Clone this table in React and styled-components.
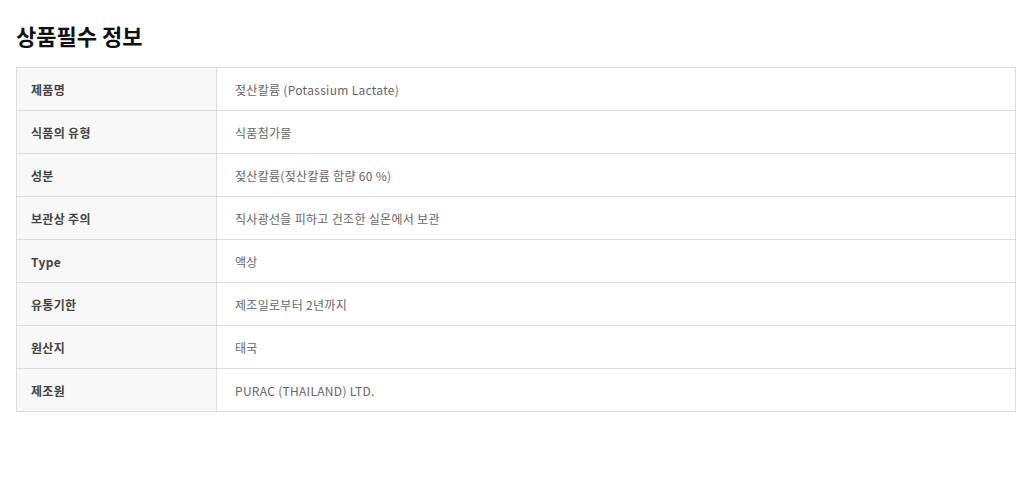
import React from "react";
import styled, { createGlobalStyle } from "styled-components";

const Global = createGlobalStyle`
  html, body { margin: 0; padding: 0; background: #fff; }
  body { font-family: "Noto Sans CJK KR", "Noto Sans", sans-serif; }
`;

const Wrap = styled.div`
  padding: 20px 17px 0 16px;
`;

const Title = styled.h2`
  margin: 0 0 17px;
  font-size: 22px;
  line-height: 30px;
  font-weight: 700;
  color: #111;
  letter-spacing: 0;
`;

const Table = styled.table`
  width: 1000px;
  border-collapse: collapse;
  table-layout: fixed;
  border: 1px solid #dcdcdc;
`;

const Row = styled.tr`
  height: 43px;
`;

const Th = styled.th`
  width: 200px;
  box-sizing: border-box;
  padding: 0 14px;
  background: #f8f8f8;
  border: 1px solid #dcdcdc;
  text-align: left;
  font-size: 12px;
  font-weight: 700;
  color: #444;
  letter-spacing: 0.3px;
`;

const Td = styled.td`
  padding: 0 18px;
  border: 1px solid #dcdcdc;
  font-size: 12px;
  color: #666;
  letter-spacing: 0.3px;
`;

const rows = [
  ["제품명", "젖산칼륨 (Potassium Lactate)"],
  ["식품의 유형", "식품첨가물"],
  ["성분", "젖산칼륨(젖산칼륨 함량 60 %)"],
  ["보관상 주의", "직사광선을 피하고 건조한 실온에서 보관"],
  ["Type", "액상"],
  ["유통기한", "제조일로부터 2년까지"],
  ["원산지", "태국"],
  ["제조원", "PURAC (THAILAND) LTD."],
];

export default function App() {
  return (
    <Wrap>
      <Global />
      <Title>상품필수 정보</Title>
      <Table>
        <tbody>
          {rows.map(([k, v]) => (
            <Row key={k}>
              <Th>{k}</Th>
              <Td>{v}</Td>
            </Row>
          ))}
        </tbody>
      </Table>
    </Wrap>
  );
}
